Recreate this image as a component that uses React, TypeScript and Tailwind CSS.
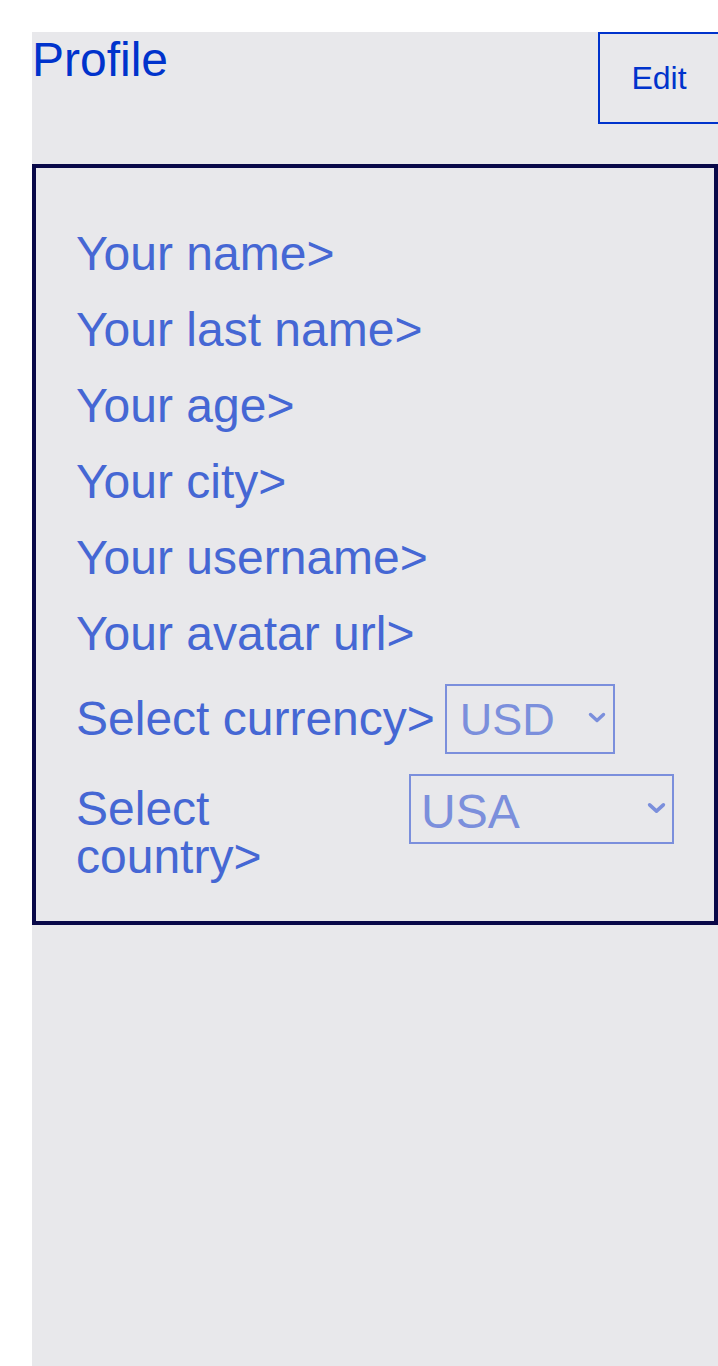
function Chevron({ className }: { className: string }) {
  return (
    <svg
      className={className}
      viewBox="0 0 18 11"
      fill="none"
      stroke="#7b8fdc"
      strokeWidth="3.4"
      strokeLinecap="round"
      strokeLinejoin="round"
    >
      <polyline points="2.5,2.5 9,8.5 15.5,2.5" />
    </svg>
  );
}

export default function App() {
  const label = "text-[48px] leading-[48px] text-[#4567d4]";
  return (
    <div className="min-h-[1366px] bg-white overflow-hidden font-['Liberation_Sans',Arial,sans-serif]">
      <div className="ml-8 mt-8 min-h-[1334px] bg-[#e8e8eb] overflow-hidden">
        <div className="flex items-start justify-between">
          <h1 className="text-[48px] leading-[normal] text-[#0033cc]">Profile</h1>
          <button className="-mr-[2px] flex h-[92px] w-[122px] shrink-0 items-center justify-center border-2 border-[#0033cc] text-[32px] leading-[normal] text-[#0033cc]">
            Edit
          </button>
        </div>
        <div className="mt-10 flex flex-col border-4 border-[#080848] px-10 pb-[40px] pt-[62px]">
          <div className="flex flex-col gap-[28px]">
            <div className={label}>Your name&gt;</div>
            <div className={label}>Your last name&gt;</div>
            <div className={label}>Your age&gt;</div>
            <div className={label}>Your city&gt;</div>
            <div className={label}>Your username&gt;</div>
            <div className={label}>Your avatar url&gt;</div>
          </div>
          <div className="mt-[26px] flex items-baseline gap-[10px]">
            <label className={label}>Select currency&gt;</label>
            <div className="relative shrink-0">
              <select
                defaultValue="USD"
                className="block h-[70px] w-[170px] appearance-none border-2 border-[#7b8fdc] pl-[13px] text-[45px] text-[#7b8fdc]"
              >
                <option value="USD">USD</option>
                <option value="EUR">EUR</option>
              </select>
              <Chevron className="pointer-events-none absolute right-[9px] top-[28px] h-[11px] w-[18px]" />
            </div>
          </div>
          <div className="mt-[20px] flex items-start gap-[10px]">
            <label className={`${label} mt-[11px]`}>Select country&gt;</label>
            <div className="relative shrink-0">
              <select
                defaultValue="USA"
                className="block h-[70px] w-[265px] appearance-none border-2 border-[#7b8fdc] pl-[10px] text-[48px] text-[#7b8fdc]"
              >
                <option value="USA">USA</option>
                <option value="UK">UK</option>
              </select>
              <Chevron className="pointer-events-none absolute right-[8px] top-[28px] h-[12px] w-[19px]" />
            </div>
          </div>
        </div>
      </div>
    </div>
  );
}
